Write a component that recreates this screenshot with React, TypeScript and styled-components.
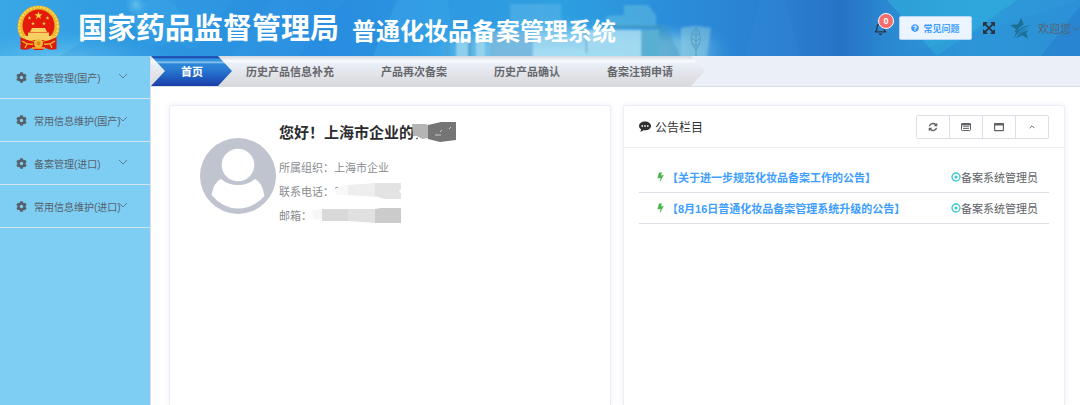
import React from "react";
import styled, { createGlobalStyle, css } from "styled-components";
import { FaCog, FaRegBell, FaQuestionCircle } from "react-icons/fa";

const GlobalStyle = createGlobalStyle`
  * { box-sizing: border-box; }
  body {
    margin: 0;
    background: #fff;
    color: #606266;
    font-family: "Liberation Sans", "Noto Sans CJK SC", sans-serif;
    font-size: 11px;
  }
  h1, h2, p, ul { margin: 0; padding: 0; }
  ul { list-style: none; }
  a { color: inherit; text-decoration: none; }
  button { font: inherit; cursor: pointer; }
  svg { display: block; flex: none; }
`;

const Page = styled.div`
  min-height: 100vh;
  display: flex;
  flex-direction: column;
`;

const Header = styled.header`
  position: relative;
  height: 56px;
  display: flex;
  align-items: center;
  padding: 0 0 0 16px;
  background: #2c92de;
  overflow: hidden;
`;

const Backdrop = styled.svg`
  position: absolute;
  inset: 0;
  width: 100%;
  height: 100%;
`;

const Brand = styled.div`
  position: relative;
  flex: 1;
  display: flex;
  align-items: center;
  color: #fff;
  white-space: nowrap;
`;

const Agency = styled.p`
  margin-left: 17px;
  font-size: 29px;
  line-height: 54px;
  height: 58px;
  font-weight: 700;
  font-family: "Noto Sans CJK SC", sans-serif;
`;

const SystemName = styled.h1`
  margin-left: 13px;
  padding-top: 4px;
  font-size: 24px;
  line-height: 48px;
  font-weight: 700;
  font-family: "Noto Sans CJK SC", sans-serif;
`;

const Tools = styled.div`
  position: relative;
  display: flex;
  align-items: center;
  height: 52px;
  white-space: nowrap;
  color: #303133;
`;

const IconButton = styled.button`
  position: relative;
  display: flex;
  padding: 0;
  border: 0;
  background: none;
  color: #2b3440;
`;

const Badge = styled.span`
  position: absolute;
  top: -9px;
  left: 4px;
  width: 16px;
  height: 16px;
  border: 1px solid #fff;
  border-radius: 8px;
  background: #f56c6c;
  color: #fff;
  font-size: 9px;
  font-weight: 700;
  line-height: 14px;
  text-align: center;
`;

const FaqButton = styled.button`
  display: flex;
  align-items: center;
  justify-content: center;
  gap: 4px;
  width: 73px;
  height: 24px;
  margin: 0 10px 0 12px;
  padding: 0;
  border: 1px solid #b3d8ff;
  border-radius: 2px;
  background: #ecf5ff;
  color: #409eff;
  && { font-size: 9px; font-weight: 700; }
`;

const UserMenu = styled.button`
  display: flex;
  align-items: center;
  margin-left: 14px;
  padding: 0;
  border: 0;
  background: none;
  color: #566470;
  span { margin: 0 0 0 6px; }
`;

const Body = styled.div`
  flex: 1;
  display: flex;
`;

const Sidebar = styled.nav`
  flex: none;
  width: 151px;
  background: #7ecef4;
  border-right: 1px solid #dcdfe6;
`;

const MenuItem = styled.button`
  width: 100%;
  height: 43px;
  display: flex;
  align-items: center;
  padding: 0 22px 0 16px;
  border: 0;
  border-bottom: 1px solid #d3e6f0;
  background: none;
  color: #56606a;
  white-space: nowrap;
  text-align: left;
`;

const MenuLabel = styled.span`
  flex: 1;
  min-width: 0;
  margin-left: 7px;
  font-size: 10px;
`;

const MenuArrow = styled.span`
  padding-bottom: 3px;
  color: #5c7f93;
`;

const Main = styled.main`
  flex: 1;
  min-width: 0;
  display: flex;
  flex-direction: column;
`;

const TabBar = styled.nav`
  height: 31px;
  display: flex;
  background: #eaeff8;
  border-bottom: 1px solid #d8dfea;
`;

const Tabs = styled.ul`
  display: flex;
  gap: 1px;
  padding-right: 9px;
  background: linear-gradient(#d3d7de 0, #e0e4ec 2px, #fafbfe 5px, #e9eef7 8px, #e2e4e9 18px, #d8d9db 30px);
  clip-path: polygon(0 0, calc(100% - 14px) 0, 100% 50%, calc(100% - 14px) 100%, 0 100%);
  li:first-child { margin-right: -10px; }
`;

const Tab = styled.a<{ $active?: boolean }>`
  display: block;
  height: 30px;
  padding: 0 23px;
  line-height: 31px;
  font-weight: 700;
  font-family: "Noto Sans CJK SC", sans-serif;
  color: #66686c;
  white-space: nowrap;
  ${(p) =>
    p.$active &&
    css`
      padding: 0 29px 0 30px;
      color: #fff;
      background: linear-gradient(#2358b4 0, #1b50b5 2px, #3b9be8 3px, #2f8ddf 5px, #9bd0f3 6px, #2b85d8 8px, #2b7fd4 12px, #2063c4 20px, #1c3ea8 30px);
      clip-path: polygon(0 0, calc(100% - 14px) 0, 100% 50%, calc(100% - 14px) 100%, 0 100%, 14px 50%);
    `}
`;

const Panels = styled.div`
  flex: 1;
  display: grid;
  grid-template-columns: 1fr 1fr;
  gap: 12px;
  padding: 18px 15px 0 18px;
`;

const Card = styled.section`
  min-width: 0;
  border: 1px solid #ebeef5;
  border-bottom: 0;
  border-radius: 3px 3px 0 0;
  background: #fff;
  box-shadow: 0 0 6px #eaeefa;
`;

const Profile = styled.div`
  display: flex;
  gap: 3px;
  padding: 13px 10px 13px 30px;
  > svg { margin-top: 19px; }
`;

const Greeting = styled.h2`
  display: flex;
  align-items: center;
  margin-bottom: 10px;
  font-size: 15px;
  line-height: 26px;
  font-weight: 700;
  font-family: "Noto Sans CJK SC", sans-serif;
  color: #2c2c2e;
  white-space: nowrap;
  svg { margin-left: -3px; }
`;

const Field = styled.div`
  display: flex;
  align-items: center;
  height: 24px;
  color: #8a8c90;
  white-space: nowrap;
`;

const CardHead = styled.div`
  display: flex;
  align-items: center;
  height: 42px;
  padding: 0 15px;
  border-bottom: 1px solid #ebeef5;
`;

const CardTitle = styled.h2`
  flex: 1;
  margin-left: 4px;
  font-size: 12px;
  font-weight: 400;
  color: #303133;
`;

const ButtonGroup = styled.div`
  display: flex;
  border: 1px solid #dcdfe6;
  border-radius: 2px;
`;

const GroupButton = styled.button`
  width: 32px;
  height: 22px;
  display: flex;
  align-items: center;
  justify-content: center;
  padding: 0;
  border: 0;
  background: #fff;
  color: #606266;
  & + & { width: 33px; border-left: 1px solid #dcdfe6; }
`;

const Notices = styled.ul`
  padding: 14px 15px;
`;

const Notice = styled.li`
  display: flex;
  align-items: center;
  height: 31px;
  padding: 0 11px 0 18px;
  border-bottom: 1px solid #dcdfe6;
  white-space: nowrap;
`;

const NoticeLink = styled.a`
  flex: 1;
  margin-left: 3px;
  color: #409eff;
  font-weight: 700;
`;

const Author = styled.span`
  display: flex;
  align-items: center;
  color: #606266;
`;

const HeaderArt = () => (
  <Backdrop viewBox="0 0 1080 56" preserveAspectRatio="xMidYMid slice" aria-hidden="true">
    <defs>
      <linearGradient id="sky" x1="0" x2="1" y1="0" y2="0">
        <stop offset="0" stopColor="#39a6e5" />
        <stop offset=".14" stopColor="#2f9be2" />
        <stop offset=".3" stopColor="#2b8fe1" />
        <stop offset=".4" stopColor="#2f98e2" />
        <stop offset=".52" stopColor="#2d9fe0" />
        <stop offset=".63" stopColor="#2b8cda" />
        <stop offset=".73" stopColor="#2a7dd0" />
        <stop offset=".78" stopColor="#2673c6" />
        <stop offset=".82" stopColor="#2b88d0" />
        <stop offset=".9" stopColor="#2c9bda" />
        <stop offset="1" stopColor="#2e94d8" />
      </linearGradient>
      <radialGradient id="glow">
        <stop offset="0" stopColor="#7fd3f2" stopOpacity=".65" />
        <stop offset="1" stopColor="#5cc0f0" stopOpacity="0" />
      </radialGradient>
      <linearGradient id="glass" x1="0" x2="0" y1="0" y2="1">
        <stop offset="0" stopColor="#7cc6ec" stopOpacity=".1" />
        <stop offset=".5" stopColor="#9ad6f0" stopOpacity=".75" />
        <stop offset="1" stopColor="#aedff4" />
      </linearGradient>
      <linearGradient id="mist" x1="0" x2="1" y1="0" y2="0">
        <stop offset="0" stopColor="#7fcdf0" stopOpacity="0" />
        <stop offset=".2" stopColor="#86cfee" stopOpacity=".8" />
        <stop offset=".8" stopColor="#8ed0e8" stopOpacity=".8" />
        <stop offset="1" stopColor="#8fc8e0" stopOpacity="0" />
      </linearGradient>
      <filter id="haze" x="-10%" y="-60%" width="120%" height="220%">
        <feGaussianBlur stdDeviation="6" />
      </filter>
      <filter id="soft" x="-5%" y="-20%" width="110%" height="140%">
        <feGaussianBlur stdDeviation=".8" />
      </filter>
    </defs>
    <rect width="1080" height="56" fill="url(#sky)" />
    <ellipse cx="60" cy="60" rx="110" ry="28" fill="url(#glow)" />
    <circle cx="136" cy="5" r="11" fill="url(#glow)" />
    <circle cx="158" cy="22" r="24" fill="#5fc0ee" opacity=".14" />
    <path d="M60 56 120 20 210 56zM190 56 232 0h40l-40 56z" fill="#2284d8" opacity=".18" />
    <path d="M300 56 345 0h50l-22 56z" fill="#1f86da" opacity=".25" />
    <path d="M373 56 398 0h50l8 56z" fill="#38a8e8" opacity=".35" />
    <ellipse cx="570" cy="58" rx="170" ry="42" fill="url(#glow)" />
    <rect x="440" y="36" width="285" height="32" fill="url(#mist)" filter="url(#haze)" />
    <g filter="url(#soft)">
      <path d="M510 4h51v40h-51z" fill="#80cbee" opacity=".3" />
      <circle cx="534" cy="12" r="7" fill="none" stroke="#4fa9dc" strokeWidth="1" opacity=".7" />
      <path d="M490 32h43v26h-43z" fill="#78b4da" opacity=".7" />
      <path d="M533 20h54v38h-54z" fill="url(#glass)" />
      <path d="M587 30h54v28h-54z" fill="#a7dcf2" opacity=".85" />
      <path d="M641 30h18v28h-18z" fill="#58afd3" />
      <path d="M659 26h8l14 32h-22z" fill="#3f94ba" opacity=".45" />
      <path d="M624 5h24l8 10v12h-50V16l18-1z" fill="#65bfe4" opacity=".5" />
      <path d="M612 25h50v3h-50z" fill="#3f93bb" opacity=".6" />
      <path d="M586 30h1v24h-1z" fill="#2f7fab" opacity=".8" />
      <path d="M540 56q60-8 110 2H540z" fill="#9fe0f4" opacity=".6" />
      <path d="M456 38h12v20h-12zM476 36h9v22h-9z" fill="#a6dcf0" opacity=".7" />
      <path d="M468 40h3v18h-3zM446 46h2v12h-2z" fill="#4d98bd" opacity=".6" />
      <path d="M681 28q12-4 30 0l-4 30h-26z" fill="#9ad2e0" opacity=".45" />
    </g>
    <path d="M696 27q-10 12 0 23 9-11 0-23v29M696 36l-4-3M696 36l4-3M696 41l-5-3M696 41l5-3M696 46l-4-3M696 46l4-3" fill="none" stroke="#4b94b4" strokeWidth="1" opacity=".7" />
    <path d="M760 0h25l15 56h-55z" fill="#3a91dc" opacity=".2" />
    <path d="M887 0h130l-80 56z" fill="#32b4de" opacity=".5" />
    <path d="M900 56 1080 0v56z" fill="#2a86d2" opacity=".25" />
    <path d="M1041 56 1080 6v50z" fill="#2378cc" opacity=".45" />
  </Backdrop>
);

const STAR = "M0-4 1-1.2H4L1.6.5 2.5 3.4 0 1.6-2.5 3.4-1.6.5-4-1.2H-1z";

const Emblem = () => (
  <svg width="45" height="46" viewBox="0 0 45 46" role="img" aria-label="国徽">
    <circle cx="22.5" cy="21.5" r="21" fill="#eab52c" />
    <circle cx="22.5" cy="21.5" r="19.3" fill="none" stroke="#f8da58" strokeWidth="2" strokeDasharray="2 1.4" />
    <circle cx="22.5" cy="20.5" r="16" fill="#e31a0c" />
    <path d={STAR} transform="translate(22.5 10.5)" fill="#f8d548" />
    {[[13.5, 13], [31.5, 13], [17, 18.5], [28, 18.5]].map(([x, y]) => (
      <path key={`${x}-${y}`} d={STAR} transform={`translate(${x} ${y}) scale(.5)`} fill="#f8d548" />
    ))}
    <path d="M16 23h13l2 4h-17zM12 27.5h21v3.5h-21zM8 31h29l-2 4H10z" fill="#f6d060" />
    <path d="M4.5 32q9 5 18 5t18-5v12q-6 2-11-1l-3 2h-8l-3-2q-5 3-11 1z" fill="#dc1a0c" />
    <circle cx="22.5" cy="38.5" r="4.5" fill="#eebc34" />
    <circle cx="22.5" cy="38.5" r="2" fill="#dc8a1c" />
    <path d="M6 36q5 4 11 3M39 36q-5 4-11 3M9 43l2-4M36 43l-2-4M16 43h13" fill="none" stroke="#f0b82c" strokeWidth="1.4" />
  </svg>
);

const StarLogo = () => (
  <svg width="22" height="21" viewBox="0 0 22 21" fill="#1d6f93" aria-hidden="true">
    <path d="M11 0 13.8 6.2Q9 9 6 14.5L4.8 13.5 6 11.3 0 7 8 6.3z" />
    <path d="M22 7.2Q10 9 4 20.5L5.6 15.6Q10 7.5 22 7.2z" />
    <path d="M20.500 10.200Q12 11.500 7 17.800L6.500 18.500Q10.500 10.200 20.500 10.200z" />
    <path d="M18.500 12.600 16.200 14.600 17.800 20.500 12 17.200 6 20.200Q10 13.500 18.500 12.600z" />
  </svg>
);

const Chevron = ({ size, up }: { size: number; up?: boolean }) => (
  <svg width={size} height={size} viewBox="0 0 10 10" fill="none" stroke="currentColor" strokeWidth={up ? 1.5 : 1} aria-hidden="true">
    <path d={up ? "M1 7 5 3 9 7" : "M1 3 5 7 9 3"} />
  </svg>
);

const ExpandIcon = () => (
  <svg width="14" height="14" viewBox="0 0 1792 1792" fill="currentColor" aria-hidden="true">
    <path d="M1411 541l-355 355 355 355 144-144q29-31 70-14 39 17 39 59v448q0 26-19 45t-45 19h-448q-42 0-59-40-17-39 14-69l144-144-355-355-355 355 144 144q31 30 14 69-17 40-59 40h-448q-26 0-45-19t-19-45v-448q0-42 40-59 39-17 69 14l144 144 355-355-355-355-144 144q-19 19-45 19-12 0-24-5-40-17-40-59v-448q0-26 19-45t45-19h448q42 0 59 40 17 39-14 69l-144 144 355 355 355-355-144-144q-31-30-14-69 17-40 59-40h448q26 0 45 19t19 45v448q0 42-39 59-13 5-25 5-26 0-45-19z" />
  </svg>
);

const RefreshIcon = () => (
  <svg width="10" height="10" viewBox="0 0 1792 1792" fill="currentColor" aria-hidden="true">
    <path d="M1639 1056q0 5-1 7-64 268-268 434.5t-478 166.5q-146 0-282.5-55t-243.5-157l-129 129q-19 19-45 19t-45-19-19-45v-448q0-26 19-45t45-19h448q26 0 45 19t19 45-19 45l-137 137q71 66 161 102t187 36q134 0 250-65t186-179q11-17 53-117 8-23 30-23h192q13 0 22.5 9.5t9.5 22.5zm25-800v448q0 26-19 45t-45 19h-448q-26 0-45-19t-19-45 19-45l138-138q-148-137-349-137-134 0-250 65t-186 179q-11 17-53 117-8 23-30 23h-199q-13 0-22.5-9.5t-9.5-22.5v-7q65-268 270-434.5t480-166.5q146 0 284 55.5t245 156.5l130-129q19-19 45-19t45 19 19 45z" />
  </svg>
);

const ListIcon = () => (
  <svg width="10" height="10" viewBox="0 0 10 10" aria-hidden="true">
    <rect x=".5" y="1.5" width="9" height="7" rx=".8" fill="none" stroke="currentColor" />
    <path d="M0 1.5h10v2H0z" fill="currentColor" />
    <path d="M2 4.7h6M2 6.5h6" stroke="currentColor" strokeWidth=".9" />
  </svg>
);

const WindowIcon = () => (
  <svg width="10" height="10" viewBox="0 0 10 10" aria-hidden="true">
    <rect x=".6" y="1.6" width="8.8" height="7" rx=".6" fill="none" stroke="currentColor" strokeWidth="1.2" />
    <path d="M0 1.2h10v2.3H0z" fill="currentColor" />
  </svg>
);

const CommentIcon = () => (
  <svg width="12" height="11" viewBox="0 0 12 11" aria-hidden="true">
    <path d="M6 .5c3.400 0 6 2 6 4.400S9.400 9.300 6 9.300l-1.400-.1Q3 10.600 1 10.800q1-1 1.100-2.500Q0 7 0 4.900C0 2.500 2.600.5 6 .5z" fill="#303133" />
    <path d="M2.500 4.200h1.600v1.500H2.500zM5.200 4.200h1.600v1.500H5.200zM7.900 4.200h1.600v1.500H7.900z" fill="#fff" />
  </svg>
);

const BoltIcon = () => (
  <svg width="7" height="11" viewBox="0 0 7 11" fill="#4cb44c" aria-hidden="true">
    <path d="M2 .5h3L4 3.400l2.800-.6L2.600 10.800 3.500 5.800.4 6.500z" />
  </svg>
);

const TargetIcon = () => (
  <svg width="10" height="10" viewBox="0 0 10 10" aria-hidden="true">
    <circle cx="5" cy="5" r="4" fill="none" stroke="#36c6d3" strokeWidth="1.3" />
    <circle cx="5" cy="5" r="1.5" fill="#36c6d3" />
  </svg>
);

const Avatar = () => (
  <svg width="76" height="76" viewBox="0 0 76 76" role="img" aria-label="头像">
    <circle cx="38" cy="38" r="38" fill="#bfc4cf" />
    <circle cx="38" cy="27" r="16.3" fill="#fff" />
    <path d="M21 41Q28 47 38 47T55 41Q62 44 64.500 58 53 70.500 38 70.500T11.500 57Q14 44 21 41z" fill="#fff" />
  </svg>
);

const NameMask = () => (
  <svg width="46" height="22" viewBox="0 0 46 22" aria-hidden="true">
    <path d="M1 3h13l4 1v13l-7 1-5-3H2z" fill="#b4b4b4" />
    <path d="M17 4 30 1h15v18l-16 2-12-3z" fill="#757575" />
    <path d="M24 14h6M29 11l2-2M38 8l2-2" stroke="#ccc" strokeWidth="1" />
    <path d="m5 18 2-1" stroke="#333" strokeWidth="1" />
  </svg>
);

const PhoneMask = () => (
  <svg width="70" height="18" viewBox="0 0 70 18" aria-hidden="true">
    <path d="M0 7q7-4 14-4v10H2z" fill="#f8f8f8" />
    <path d="M14 3 42 1v14l-28-2z" fill="#eeeeee" />
    <path d="M41 1h26v6l-2 2 2 2v6H50l-9-3z" fill="#e3e3e3" />
    <path d="m1 6 3-1" stroke="#999" />
  </svg>
);

const MailMask = () => (
  <svg width="92" height="16" viewBox="0 0 92 16" aria-hidden="true">
    <path d="M0 4q5-2 11-2v11l-9-1z" fill="#f7f7f7" />
    <path d="M10 2h27v12H10z" fill="#d9d9d9" />
    <path d="M36 2h28v14l-28-2z" fill="#e0e0e0" />
    <path d="M63 2l6-1h20v15H63z" fill="#cbcbcb" />
  </svg>
);

const MENU = ["备案管理(国产)", "常用信息维护(国产)", "备案管理(进口)", "常用信息维护(进口)"];
const TABS = ["首页", "历史产品信息补充", "产品再次备案", "历史产品确认", "备案注销申请"];
const NOTICES = ["【关于进一步规范化妆品备案工作的公告】", "【8月16日普通化妆品备案管理系统升级的公告】"];

export default function App() {
  return (
    <Page>
      <GlobalStyle />
      <Header>
        <HeaderArt />
        <Brand>
          <Emblem />
          <Agency>国家药品监督管理局</Agency>
          <SystemName>普通化妆品备案管理系统</SystemName>
        </Brand>
        <Tools>
          <IconButton aria-label="消息">
            <FaRegBell size={13} />
            <Badge>0</Badge>
          </IconButton>
          <FaqButton>
            <FaQuestionCircle size={8} />
            常见问题
          </FaqButton>
          <IconButton aria-label="全屏">
            <ExpandIcon />
          </IconButton>
          <UserMenu>
            <StarLogo />
            <span>欢迎您</span>
            <Chevron size={9} />
          </UserMenu>
        </Tools>
      </Header>
      <Body>
        <Sidebar>
          {MENU.map((label) => (
            <MenuItem key={label}>
              <FaCog size={11} />
              <MenuLabel>{label}</MenuLabel>
              <MenuArrow>
                <Chevron size={10} />
              </MenuArrow>
            </MenuItem>
          ))}
        </Sidebar>
        <Main>
          <TabBar>
            <Tabs>
              {TABS.map((label, i) => (
                <li key={label}>
                  <Tab href="#" $active={i === 0}>{label}</Tab>
                </li>
              ))}
            </Tabs>
          </TabBar>
          <Panels>
            <Card>
              <Profile>
                <Avatar />
                <div>
                  <Greeting>
                    您好！上海市企业的
                    <NameMask />
                  </Greeting>
                  <Field>所属组织：上海市企业</Field>
                  <Field>
                    联系电话：
                    <PhoneMask />
                  </Field>
                  <Field>
                    邮箱：
                    <MailMask />
                  </Field>
                </div>
              </Profile>
            </Card>
            <Card>
              <CardHead>
                <CommentIcon />
                <CardTitle>公告栏目</CardTitle>
                <ButtonGroup>
                  <GroupButton aria-label="刷新"><RefreshIcon /></GroupButton>
                  <GroupButton aria-label="列表"><ListIcon /></GroupButton>
                  <GroupButton aria-label="窗口"><WindowIcon /></GroupButton>
                  <GroupButton aria-label="收起"><Chevron size={6} up /></GroupButton>
                </ButtonGroup>
              </CardHead>
              <Notices>
                {NOTICES.map((title) => (
                  <Notice key={title}>
                    <BoltIcon />
                    <NoticeLink href="#">{title}</NoticeLink>
                    <Author>
                      <TargetIcon />
                      备案系统管理员
                    </Author>
                  </Notice>
                ))}
              </Notices>
            </Card>
          </Panels>
        </Main>
      </Body>
    </Page>
  );
}
